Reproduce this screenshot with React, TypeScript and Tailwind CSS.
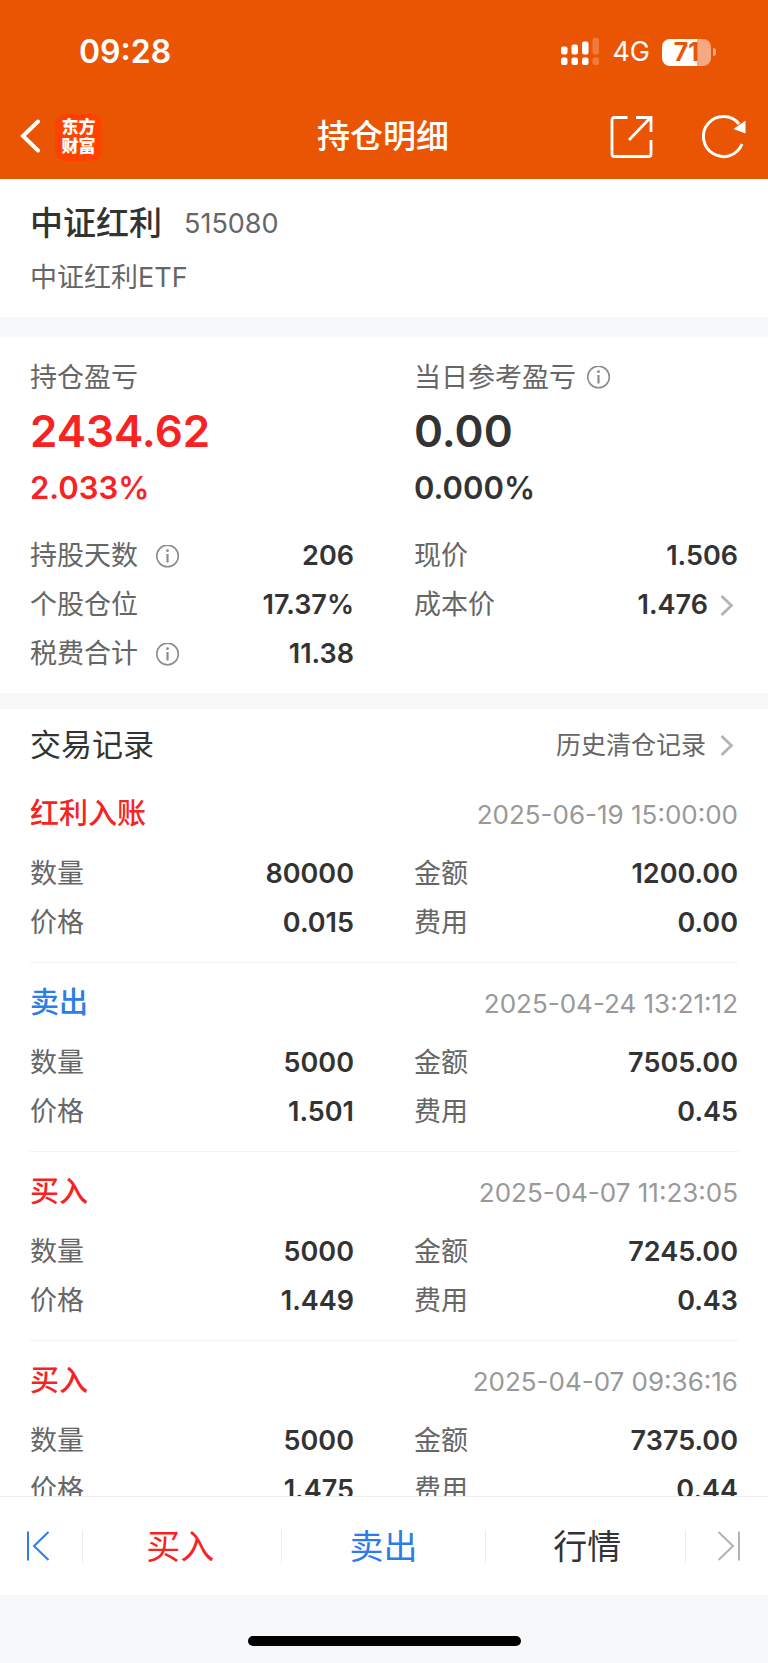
import type { ReactNode } from "react";

type Trade = {
  kind: string;
  tone: "red" | "blue";
  time: string;
  quantity: string;
  amount: string;
  price: string;
  fee: string;
};

const trades: Trade[] = [
  { kind: "红利入账", tone: "red", time: "2025-06-19 15:00:00", quantity: "80000", amount: "1200.00", price: "0.015", fee: "0.00" },
  { kind: "卖出", tone: "blue", time: "2025-04-24 13:21:12", quantity: "5000", amount: "7505.00", price: "1.501", fee: "0.45" },
  { kind: "买入", tone: "red", time: "2025-04-07 11:23:05", quantity: "5000", amount: "7245.00", price: "1.449", fee: "0.43" },
  { kind: "买入", tone: "red", time: "2025-04-07 09:36:16", quantity: "5000", amount: "7375.00", price: "1.475", fee: "0.44" },
];

function InfoButton({ label }: { label: string }) {
  return (
    <button type="button" aria-label={label} className="text-[#8c8c8c]">
      <svg className="block size-6" viewBox="0 0 24 24" fill="none" stroke="currentColor">
        <circle cx="11.500" cy="11" r="10.800" strokeWidth="1.600" />
        <path d="M11.500 9v8.500" strokeWidth="2.200" />
        <circle cx="11.500" cy="5.700" r="1.400" fill="currentColor" stroke="none" />
      </svg>
    </button>
  );
}

function Chevron() {
  return (
    <svg className="block h-6 w-[18px] text-[#b3b3b3]" viewBox="0 0 18 24" fill="none" stroke="currentColor" strokeWidth="2.800">
      <path d="M1.500 2l10 9.500L1.500 21" />
    </svg>
  );
}

function Field({ label, value, info, children }: { label: string; value: string; info?: boolean; children?: ReactNode }) {
  return (
    <div className="flex h-[49px] items-center justify-between">
      <dt className="flex items-center gap-[18px] text-[27px] text-[#666]">
        {label}
        {info && <InfoButton label={`${label}说明`} />}
      </dt>
      <dd className="flex items-center gap-3 text-[27px] font-semibold text-[#333]">
        {value}
        {children}
      </dd>
    </div>
  );
}

function StatusBar() {
  return (
    <div className="flex h-[104px] items-center justify-between pr-[52px] pl-[79px]">
      <span className="text-[32px] font-semibold">09:28</span>
      <div className="flex items-center gap-3">
        <svg className="block h-7 w-10" viewBox="0 0 40 28" fill="currentColor">
          <rect x="1" y="8.500" width="6.500" height="8" rx="2" />
          <rect x="11.500" y="6.500" width="6.500" height="10" rx="2" />
          <rect x="22" y="3.500" width="6.500" height="13" rx="2" />
          <rect x="32.500" y="0" width="6.500" height="16.500" rx="2" opacity="0.22" />
          <rect x="1" y="19.500" width="6.500" height="7.500" rx="2" />
          <rect x="11.500" y="19.500" width="6.500" height="7.500" rx="2" />
          <rect x="22" y="19.500" width="6.500" height="7.500" rx="2" />
          <rect x="32.500" y="19.500" width="6.500" height="7.500" rx="2" opacity="0.22" />
        </svg>
        <span className="text-[27px]">4G</span>
        <div className="flex items-center gap-[2px]">
          <div className="flex h-[27px] w-[49px] items-center justify-center rounded-[8px] bg-linear-to-r from-white from-71% to-[#f5a983] to-71%">
            <span className="text-[25px] leading-none font-bold text-[#ea5504]">71</span>
          </div>
          <div className="h-2 w-[3px] rounded-r-full bg-[#f5a983]" />
        </div>
      </div>
    </div>
  );
}

function NavBar() {
  return (
    <div className="grid h-[75px] grid-cols-[1fr_auto_1fr] items-center pr-[22px] pb-[9px] pl-5">
      <div className="flex items-center gap-[14px]">
        <button type="button" aria-label="返回">
          <svg className="block h-9 w-[21px]" viewBox="0 0 21 36" fill="none" stroke="currentColor" strokeWidth="4" strokeLinecap="round">
            <path d="M18 2.500L3 17l15 14.500" />
          </svg>
        </button>
        <div className="flex size-[47px] flex-col items-center justify-center rounded-[10px] bg-[#ff4200] text-[17px] leading-[19px] font-black">
          <span>东方</span>
          <span>财富</span>
        </div>
      </div>
      <h1 className="text-[33px] font-medium">持仓明细</h1>
      <div className="flex items-center justify-end gap-[49px]">
        <button type="button" aria-label="分享">
          <svg className="block size-[43px]" viewBox="0 0 43 43" fill="none" stroke="currentColor" strokeWidth="2.800">
            <path d="M17.500 1.500H4.500Q2 1.500 2 4V38Q2 40.500 4.500 40.500H38.500Q41 40.500 41 38V24" />
            <path d="M26 1.500H41V16M40.500 1.600L19 24" />
          </svg>
        </button>
        <button type="button" aria-label="刷新">
          <svg className="block size-11" viewBox="0 0 44 44" fill="none" stroke="currentColor" strokeWidth="3">
            <path d="M40 29A20 20 0 1 1 37 9" />
            <path d="M43.500 5.500V18.500L31.500 14Z" fill="currentColor" stroke="none" />
          </svg>
        </button>
      </div>
    </div>
  );
}

function TradeRecord({ trade }: { trade: Trade }) {
  return (
    <li className="border-b border-[#f2f3f4] pt-4 pb-[14px]">
      <div className="mb-3 flex h-12 items-center justify-between">
        <h3 className={trade.tone === "red" ? "text-[29px] font-medium text-[#f72323]" : "text-[29px] font-medium text-[#2b7de8]"}>
          {trade.kind}
        </h3>
        <time className="text-[26px] text-[#999]">{trade.time}</time>
      </div>
      <dl className="grid grid-cols-2 gap-x-[60px]">
        <Field label="数量" value={trade.quantity} />
        <Field label="金额" value={trade.amount} />
        <Field label="价格" value={trade.price} />
        <Field label="费用" value={trade.fee} />
      </dl>
    </li>
  );
}

export default function App() {
  return (
    <div className="flex h-screen flex-col bg-[#f6f8fa] font-['Inter','Noto_Sans_CJK_SC',sans-serif] text-[#333]">
      <header className="shrink-0 bg-[#ea5504] text-white">
        <StatusBar />
        <NavBar />
      </header>

      <main className="min-h-0 flex-1 overflow-y-auto [scrollbar-width:none]">
        <section className="bg-white px-[30px] pt-[21px] pb-[9px]">
          <div className="flex h-12 items-center gap-[22px]">
            <h2 className="text-[33px] font-medium">中证红利</h2>
            <span className="text-[27px] text-[#666]">515080</span>
          </div>
          <p className="flex h-[60px] items-center text-[27px] text-[#666]">中证红利ETF</p>
        </section>

        <section className="mt-5 bg-white px-[30px] pt-[21px] pb-[14px]">
          <div className="grid grid-cols-2 gap-x-[60px]">
            <div className="text-[#f72323]">
              <div className="flex h-10 items-center text-[27px] text-[#666]">持仓盈亏</div>
              <div className="flex h-[66px] items-center text-[44px] font-semibold">2434.62</div>
              <div className="flex h-12 items-center text-[31px] font-semibold">2.033%</div>
            </div>
            <div>
              <div className="flex h-10 items-center gap-[11px] text-[27px] text-[#666]">
                当日参考盈亏
                <InfoButton label="当日参考盈亏说明" />
              </div>
              <div className="flex h-[66px] items-center text-[44px] font-semibold">0.00</div>
              <div className="flex h-12 items-center text-[31px] font-semibold">0.000%</div>
            </div>
          </div>
          <dl className="mt-5 grid grid-cols-2 gap-x-[60px]">
            <Field label="持股天数" value="206" info />
            <Field label="现价" value="1.506" />
            <Field label="个股仓位" value="17.37%" />
            <Field label="成本价" value="1.476">
              <button type="button" aria-label="查看成本价">
                <Chevron />
              </button>
            </Field>
            <Field label="税费合计" value="11.38" info />
          </dl>
        </section>

        <section className="mt-4 bg-white px-[30px] pt-2">
          <div className="flex h-[57px] items-center justify-between">
            <h2 className="text-[31px]">交易记录</h2>
            <a href="#history" className="flex items-center gap-[14px] text-[25px] text-[#666]">
              历史清仓记录
              <Chevron />
            </a>
          </div>
          <ul>
            {trades.map((trade) => (
              <TradeRecord key={trade.time} trade={trade} />
            ))}
          </ul>
        </section>
      </main>

      <footer className="shrink-0">
        <nav className="flex h-[99px] items-center border-t border-[#ececec] bg-white text-[34px]">
          <button type="button" aria-label="上一只" className="flex w-[82px] justify-center pr-[6px] text-[#2b7de8]">
            <svg className="block h-8 w-6" viewBox="0 0 24 32" fill="none" stroke="currentColor" strokeWidth="2">
              <path d="M2 1.500v29M22.500 2L8 16l14.500 14" />
            </svg>
          </button>
          <div className="grid h-[33px] flex-1 grid-cols-[200fr_204fr_200fr] grid-rows-1 divide-x divide-[#ececec] border-x border-[#ececec]">
            <button type="button" className="flex items-center justify-center pr-1 text-[#f72323]">买入</button>
            <button type="button" className="flex items-center justify-center text-[#2b7de8]">卖出</button>
            <button type="button" className="flex items-center justify-center pl-1">行情</button>
          </div>
          <button type="button" aria-label="下一只" className="flex w-[82px] justify-center pl-1 text-[#b3b3b3]">
            <svg className="block h-8 w-6" viewBox="0 0 24 32" fill="none" stroke="currentColor" strokeWidth="2">
              <path d="M22 1.500v29M1.500 2L16 16L1.500 30" />
            </svg>
          </button>
        </nav>
        <div className="flex h-[68px] justify-center pt-[41px]">
          <div className="h-[10px] w-[273px] rounded-full bg-black" />
        </div>
      </footer>
    </div>
  );
}
